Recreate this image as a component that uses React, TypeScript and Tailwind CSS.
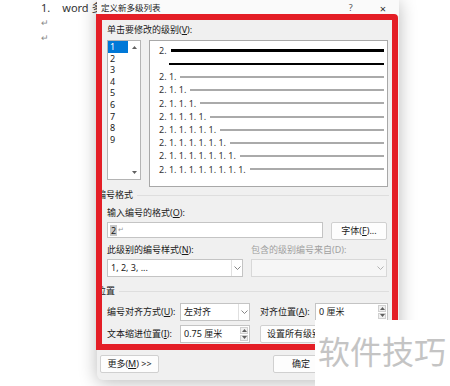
import React from "react";

const FONT = "font-['Noto_Sans','Noto_Sans_CJK_SC',sans-serif]";

const Chevron = ({ color = "#777" }: { color?: string }) => (
  <svg width="7" height="4" viewBox="0 0 7 4">
    <path d="M0.5 0.5 L3.5 3.5 L6.5 0.5" fill="none" stroke={color} strokeWidth="0.9" />
  </svg>
);

const Tri = ({ up }: { up?: boolean }) => (
  <svg width="5" height="3" viewBox="0 0 5 3">
    <path d={up ? "M0 3 L2.5 0 L5 3 Z" : "M0 0 L2.5 3 L5 0 Z"} fill="#606060" />
  </svg>
);

const Select = ({ value, className }: { value: string; className: string }) => (
  <div className={`flex h-[18px] border border-[#c4c4c4] bg-white ${className}`}>
    <span className="flex-1 pl-[3px] text-[9px] leading-[16px] text-[#1a1a1a] truncate">{value}</span>
    <span className="w-[11px] border-l border-[#e0e0e0] flex items-center justify-center">
      <Chevron />
    </span>
  </div>
);

const Spin = ({ value, className }: { value: string; className: string }) => (
  <div className={`flex h-[18px] border border-[#c4c4c4] bg-white ${className}`}>
    <span className="flex-1 pl-[3px] text-[9px] leading-[16px] text-[#1a1a1a]">{value}</span>
    <span className="w-[8px] my-[1px] mr-[1px] flex flex-col gap-[1px]">
      <span className="flex-1 bg-[#f0f0f0] border border-[#d0d0d0] flex items-center justify-center"><Tri up /></span>
      <span className="flex-1 bg-[#f0f0f0] border border-[#d0d0d0] flex items-center justify-center"><Tri /></span>
    </span>
  </div>
);

const Btn = ({ children, className = "" }: { children?: React.ReactNode; className?: string }) => (
  <div className={`h-[18px] bg-[#fdfdfd] border border-[#d0d0d0] rounded-[2px] flex items-center justify-center text-[9px] text-[#1a1a1a] ${className}`}>
    {children}
  </div>
);

const Label = ({ children, className = "" }: { children: React.ReactNode; className?: string }) => (
  <div className={`text-[9px] leading-[12px] text-[#1a1a1a] ${className}`}>{children}</div>
);

const previewRows = [
  "2. 1.",
  "2. 1. 1.",
  "2. 1. 1. 1.",
  "2. 1. 1. 1. 1.",
  "2. 1. 1. 1. 1. 1.",
  "2. 1. 1. 1. 1. 1. 1.",
  "2. 1. 1. 1. 1. 1. 1. 1.",
  "2. 1. 1. 1. 1. 1. 1. 1. 1.",
];

export default function App() {
  return (
    <div className={`relative w-[450px] h-[386px] overflow-hidden bg-white ${FONT}`}>
      {/* document behind */}
      <div className="pl-[41px] pt-[1px] flex flex-col text-[#333]">
        <div className="h-[14px] flex items-center text-[11px]">
          <span>1.</span>
          <span className="ml-[12px]">word 多</span>
        </div>
        <div className="h-[15px] flex items-center text-[9px] text-[#888]">↵</div>
        <div className="h-[15px] flex items-center text-[9px] text-[#888]">↵</div>
      </div>

      {/* dialog */}
      <div className="absolute left-[97px] top-0 w-[302px] h-[380px] bg-[#f0f0f0] rounded-b-[6px] shadow-[0_2px_18px_rgba(0,0,0,0.28)] flex flex-col">
        <div className="h-[16px] bg-[#fafafa] flex items-center pl-[4px] pr-[13px] text-[8.5px] text-[#1a1a1a]">
          <span>定义新多级列表</span>
          <span className="ml-auto text-[9px] text-[#555]">?</span>
          <span className="ml-[27px] text-[11px] leading-none text-[#333]">×</span>
        </div>

        <div className="px-[10px] flex flex-col">
          <Label className="mt-[8px]">单击要修改的级别(<u>V</u>):</Label>

          <div className="mt-[4px] flex items-start">
            <div className="w-[34px] h-[140px] bg-white border border-[#b4b4b4] flex">
              <div className="flex-1 flex flex-col text-[9px] text-[#1a1a1a]">
                {["1", "2", "3", "4", "5", "6", "7", "8", "9"].map((n, i) => (
                  <div
                    key={n}
                    className={`h-[11.6px] leading-[11.6px] pl-[2px] ${i === 0 ? "bg-[#0078d7] text-white" : ""}`}
                  >
                    {n}
                  </div>
                ))}
              </div>
              <div className="w-[12px] flex flex-col items-center justify-between py-[5px]">
                <Tri up />
                <Tri />
              </div>
            </div>

            <div className="ml-[8px] w-[239px] h-[147px] bg-white border border-[#a8a8a8] pl-[9px] pr-[3px] pt-[3px] flex flex-col text-[9px] text-[#333]">
              <div className="h-[13.2px] flex items-center">
                <span>2.</span>
                <span className="ml-[4px] flex-1 h-[2.5px] bg-black" />
              </div>
              <div className="h-[13.2px] flex items-center pl-[10px]">
                <span className="flex-1 h-[2.5px] bg-black" />
              </div>
              {previewRows.map((r) => (
                <div key={r} className="h-[13.2px] flex items-center">
                  <span className="whitespace-pre">{r}</span>
                  <span className="ml-[4px] flex-1 h-[2px] bg-[#aaaaaa]" />
                </div>
              ))}
            </div>
          </div>

          <div className="mt-[2px] -ml-[10px] flex items-center">
            <Label>编号格式</Label>
            <span className="ml-[4px] flex-1 h-px bg-[#dedede]" />
          </div>

          <Label className="mt-[6px]">输入编号的格式(<u>O</u>):</Label>
          <div className="mt-[3px] flex items-start gap-[8px]">
            <div className="w-[216px] h-[16px] bg-white border border-[#c4c4c4] flex items-center pl-[2px] text-[9px]">
              <span className="bg-[#c8c8c8] px-[1px] leading-[11px] text-[#1a1a1a]">2</span>
              <span className="ml-[1px] text-[7px] text-[#999]">↵</span>
            </div>
            <Btn className="w-[56px]">字体(<u>F</u>)...</Btn>
          </div>

          <div className="mt-[4px] flex gap-[8px]">
            <Label className="w-[136px]">此级别的编号样式(<u>N</u>):</Label>
            <Label className="w-[136px] text-[#a0a0a0]">包含的级别编号来自(D):</Label>
          </div>
          <div className="mt-[3px] flex gap-[8px]">
            <Select value="1, 2, 3, ..." className="w-[136px]" />
            <div className="w-[136px] h-[18px] flex border border-[#d8d8d8] bg-[#f6f6f6]">
              <span className="flex-1" />
              <span className="w-[11px] flex items-center justify-center">
                <Chevron color="#aaa" />
              </span>
            </div>
          </div>

          <div className="mt-[8px] -ml-[10px] flex items-center">
            <Label>位置</Label>
            <span className="ml-[4px] flex-1 h-px bg-[#dedede]" />
          </div>

          <div className="mt-[6px] flex items-center">
            <Label className="w-[73px]">编号对齐方式(<u>U</u>):</Label>
            <Select value="左对齐" className="w-[70px]" />
            <Label className="ml-[10px] w-[55px]">对齐位置(<u>A</u>):</Label>
            <Spin value="0 厘米" className="w-[73px]" />
          </div>
          <div className="mt-[4px] flex items-center">
            <Label className="w-[73px]">文本缩进位置(<u>I</u>):</Label>
            <Spin value="0.75 厘米" className="w-[70px]" />
            <Btn className="ml-[10px] w-[128px] justify-start pl-[6px]">
              <span className="w-[48px] overflow-hidden whitespace-nowrap">设置所有级别</span>
            </Btn>
          </div>

          <div className="mt-[12px] -ml-[7px] flex items-center">
            <Btn className="w-[59px] h-[17px]">更多(<u>M</u>) &gt;&gt;</Btn>
            <Btn className="ml-auto w-[56px] border-[#5b9bd5]">确定</Btn>
            <Btn className="ml-[6px] w-[54px]" />
          </div>
        </div>
      </div>

      {/* red annotation frame */}
      <div className="absolute left-[96px] top-[14px] w-[302px] h-[336px] border-[6px] border-[#e41e26] rounded-tr-[4px] pointer-events-none" />

      {/* watermark */}
      <div className="absolute left-[315px] top-[320px] w-[135px] h-[66px] bg-white pl-[3px] pt-[16px]">
        <span className="block text-[32px] leading-none text-[#c4c4c4] whitespace-nowrap">软件技巧</span>
      </div>
    </div>
  );
}
